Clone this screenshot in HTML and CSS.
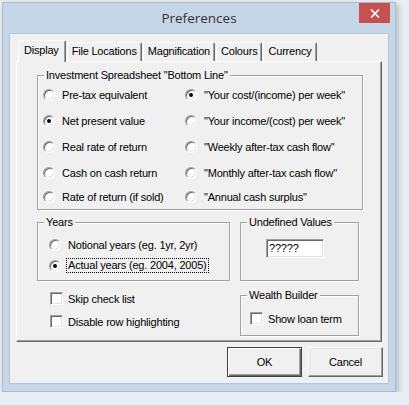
FILE: index.html
```html
<!DOCTYPE html>
<html>
<head>
<meta charset="utf-8">
<title>Preferences</title>
<link rel="stylesheet" href="styles.css">
</head>
<body>
<div class="window">
  <div class="titlebar">
    <span></span>
    <span class="title">Preferences</span>
    <button class="close" aria-label="Close"><svg width="10" height="9" viewBox="0 0 10 9"><path d="M1 0.5 L9 8.5 M9 0.5 L1 8.5" stroke="#fff" stroke-width="1.7" fill="none"/></svg></button>
  </div>
  <div class="client">
    <div class="tabs">
      <div class="tab selected">Display</div>
      <div class="tab">File Locations</div>
      <div class="tab">Magnification</div>
      <div class="tab">Colours</div>
      <div class="tab">Currency</div>
    </div>
    <div class="pane">
      <fieldset class="group">
        <legend>Investment Spreadsheet "Bottom Line"</legend>
        <div class="radio-grid">
          <div class="opt"><span class="radio"></span><span>Pre-tax equivalent</span></div>
          <div class="opt"><span class="radio on"></span><span>"Your cost/(income) per week"</span></div>
          <div class="opt"><span class="radio on"></span><span>Net present value</span></div>
          <div class="opt"><span class="radio"></span><span>"Your income/(cost) per week"</span></div>
          <div class="opt"><span class="radio"></span><span>Real rate of return</span></div>
          <div class="opt"><span class="radio"></span><span>"Weekly after-tax cash flow"</span></div>
          <div class="opt"><span class="radio"></span><span>Cash on cash return</span></div>
          <div class="opt"><span class="radio"></span><span>"Monthly after-tax cash flow"</span></div>
          <div class="opt"><span class="radio"></span><span>Rate of return (if sold)</span></div>
          <div class="opt"><span class="radio"></span><span>"Annual cash surplus"</span></div>
        </div>
      </fieldset>
      <div class="lower">
        <div class="lower-left">
          <fieldset class="group">
            <legend>Years</legend>
            <div class="years-list">
              <div class="opt row21"><span class="radio"></span><span>Notional years (eg. 1yr, 2yr)</span></div>
              <div class="opt row21"><span class="radio on"></span><span class="focus">Actual years (eg. 2004, 2005)</span></div>
            </div>
          </fieldset>
          <div class="checks">
            <div class="check-row"><span class="checkbox"></span><span>Skip check list</span></div>
            <div class="check-row"><span class="checkbox"></span><span>Disable row highlighting</span></div>
          </div>
        </div>
        <div class="lower-right">
          <fieldset class="group">
            <legend>Undefined Values</legend>
            <div class="undef-body"><div class="textbox">?????</div></div>
          </fieldset>
          <fieldset class="group wealth">
            <legend>Wealth Builder</legend>
            <div class="wealth-body">
              <div class="check-row"><span class="checkbox"></span><span>Show loan term</span></div>
            </div>
          </fieldset>
        </div>
      </div>
    </div>
    <div class="buttons">
      <button class="btn default">OK</button>
      <button class="btn">Cancel</button>
    </div>
  </div>
</div>
</body>
</html>
```

FILE: styles.css
```css
html, body {
  margin: 0;
  background: #e9eef4;
}
body {
  font-family: "Liberation Sans", Arial, sans-serif;
  font-size: 11px;
  letter-spacing: -0.2px;
  color: #000;
}
.window {
  margin: 2px 0 0 2px;
  width: 394px;
  height: 390px;
  box-sizing: border-box;
  background: #c6d6e7;
  border: 1px solid #a9bdd1;
  box-shadow: 2px 3px 6px rgba(40, 50, 60, 0.3);
  display: flex;
  flex-direction: column;
}
.titlebar {
  height: 30px;
  display: grid;
  grid-template-columns: 1fr auto 1fr;
  align-items: start;
}
.title {
  font-family: "Open Sans", "Liberation Sans", sans-serif;
  font-size: 13.5px;
  letter-spacing: 0;
  line-height: 30px;
  color: #333;
}
.close {
  justify-self: end;
  margin: 0 5px 0 0;
  width: 31px;
  height: 20px;
  background: #c75050;
  border: 0;
  padding: 0;
  display: flex;
  align-items: center;
  justify-content: center;
}
.client {
  margin: 0 6px;
  height: 351px;
  box-sizing: border-box;
  border: 1px solid #b5c5d6;
  background: #f0f0f0;
  padding: 6px;
  display: flex;
  flex-direction: column;
}
.tabs {
  display: flex;
  align-items: flex-end;
  gap: 1px;
  height: 21px;
  padding-left: 2px;
}
.tab {
  height: 19px;
  box-sizing: border-box;
  padding: 0 4px;
  border: 1px solid;
  border-color: #fff #696969 transparent #fff;
  border-bottom: 0;
  box-shadow: inset -1px 0 0 #a0a0a0;
  border-radius: 2px 2px 0 0;
  line-height: 17px;
  white-space: nowrap;
}
.tab.selected {
  height: 22px;
  margin-bottom: -1px;
  position: relative;
  z-index: 1;
  background: #f0f0f0;
  padding: 0 6px 0 5px;
  line-height: 19px;
}
.pane {
  height: 286px;
  box-sizing: border-box;
  border: 1px solid;
  border-color: #fff #696969 #696969 #fff;
  box-shadow: inset -1px -1px 0 #a0a0a0;
  padding: 6px 18px 0 20px;
}
.group {
  margin: 0;
  padding: 0;
  min-width: 0;
  border: 1px solid #a0a0a0;
  box-shadow: 1px 1px 0 #fff, inset 1px 1px 0 #fff;
}
.group legend {
  margin-left: 6px;
  padding: 0 2px;
  line-height: 14px;
  background: #f0f0f0;
}
.radio-grid {
  display: grid;
  grid-template-columns: 142px 1fr;
  grid-template-rows: repeat(4, 26px) 22px;
  padding: 0 0 1px 5px;
}
.opt {
  display: flex;
  align-items: center;
  gap: 7px;
  white-space: nowrap;
}
.radio {
  flex: none;
  width: 12px;
  height: 12px;
  box-sizing: border-box;
  border-radius: 50%;
  border: 1px solid;
  border-color: #a0a0a0 #fff #fff #a0a0a0;
  background: #fff;
  box-shadow: inset 1px 1px 0 #696969, inset -1px -1px 0 #e3e3e3;
  display: flex;
  align-items: center;
  justify-content: center;
}
.radio.on::after {
  content: "";
  width: 4px;
  height: 4px;
  border-radius: 50%;
  background: #000;
}
.lower {
  display: flex;
  gap: 10px;
  margin-top: 5px;
}
.lower-left {
  width: 193px;
}
.lower-right {
  width: 119px;
}
.years-list {
  padding: 5px 0 4px 11px;
}
.row21 {
  height: 21px;
}
.focus {
  border: 1px dotted #000;
  padding: 0 1px;
  margin-left: -2px;
  line-height: 13px;
}
.checks {
  padding: 6px 0 0 13px;
}
.check-row {
  height: 23px;
  display: flex;
  align-items: center;
  gap: 5px;
  white-space: nowrap;
}
.checkbox {
  flex: none;
  width: 13px;
  height: 13px;
  box-sizing: border-box;
  border: 1px solid;
  border-color: #a0a0a0 #fff #fff #a0a0a0;
  box-shadow: inset 1px 1px 0 #696969, inset -1px -1px 0 #e3e3e3;
  background: #fff;
}
.undef-body {
  padding: 10px 0 22px 25px;
}
.textbox {
  width: 58px;
  height: 19px;
  box-sizing: border-box;
  border: 1px solid;
  border-color: #a0a0a0 #fff #fff #a0a0a0;
  box-shadow: inset 1px 1px 0 #696969, inset -1px -1px 0 #e3e3e3;
  background: #fff;
  padding-left: 2px;
  line-height: 17px;
}
.wealth {
  margin-top: 7px;
}
.wealth-body {
  padding: 5px 0 5px 9px;
}
.buttons {
  display: flex;
  justify-content: flex-end;
  gap: 6px;
  margin-top: 5px;
  margin-right: -1px;
}
.btn {
  width: 75px;
  height: 30px;
  box-sizing: border-box;
  background: #f0f0f0;
  border: 1px solid;
  border-color: #fff #696969 #696969 #fff;
  box-shadow: inset -1px -1px 0 #a0a0a0, inset 1px 1px 0 #e3e3e3;
  font: inherit;
  letter-spacing: inherit;
  color: #000;
  padding: 0;
}
.btn.default {
  border-color: #404040;
  box-shadow: inset 1px 1px 0 #fff, inset -1px -1px 0 #696969, inset -2px -2px 0 #a0a0a0;
}
```
